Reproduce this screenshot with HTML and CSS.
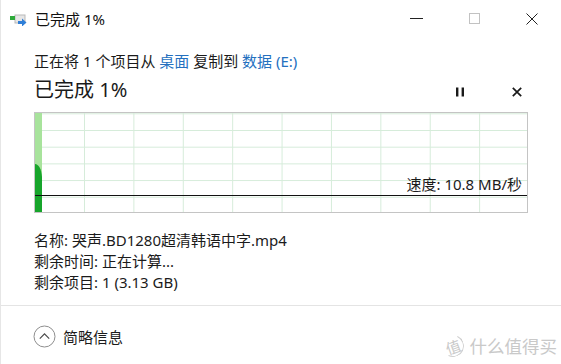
FILE: index.html
```html
<!DOCTYPE html>
<html lang="zh-CN">

<head>
    <meta charset="UTF-8">
    <meta name="viewport" content="width=device-width, initial-scale=1.0">
    <title>已完成 1%</title>
    <link rel="stylesheet" href="styles.css">
</head>

<body>

    <div class="window">
        <!-- barra del titolo -->
        <header class="titlebar">
            <svg class="app-icon" width="18" height="12" viewBox="0 0 18 12">
                <rect x="5" y="1" width="10" height="8" fill="#e6e6e6" stroke="#b9b9b9" stroke-width="1" />
                <rect x="0" y="2" width="5" height="4" fill="#2eaa3a" />
                <path d="M8 7 h4 v-2.5 l4.5 4 l-4.5 4 v-2.5 h-4 z" fill="#2f7fd8" />
            </svg>
            <span class="title">已完成 1%</span>
            <div class="controls">
                <span class="ctl"><span class="ctl-min"></span></span>
                <span class="ctl"><span class="ctl-max"></span></span>
                <span class="ctl">
                    <svg width="12" height="12" viewBox="0 0 12 12">
                        <path d="M0.5 0.5 L11.5 11.5 M11.5 0.5 L0.5 11.5" stroke="#222" stroke-width="1" />
                    </svg>
                </span>
            </div>
        </header>

        <main class="content">
            <p class="copy-line">正在将 1 个项目从 <a href="#">桌面</a> 复制到 <a href="#">数据 (E:)</a></p>

            <div class="progress-head">
                <h1>已完成 1%</h1>
                <div class="actions">
                    <button class="icon-btn" aria-label="暂停">
                        <svg width="10" height="10" viewBox="0 0 10 10">
                            <rect x="1" y="0.5" width="2.4" height="9" fill="#1a1a1a" />
                            <rect x="6.6" y="0.5" width="2.4" height="9" fill="#1a1a1a" />
                        </svg>
                    </button>
                    <button class="icon-btn" aria-label="取消">
                        <svg width="10" height="10" viewBox="0 0 10 10">
                            <path d="M0.8 0.8 L9.2 9.2 M9.2 0.8 L0.8 9.2" stroke="#1a1a1a" stroke-width="1.7" />
                        </svg>
                    </button>
                </div>
            </div>

            <!-- grafico della velocita -->
            <div class="chart">
                <svg class="chart-fill" width="8" height="99" viewBox="0 0 8 99">
                    <rect x="0" y="0" width="7" height="99" fill="#a8e39c" />
                    <path d="M0 51 C3.5 51 6.5 56 7 64 L7 99 L0 99 Z" fill="#17a52b" />
                </svg>
                <div class="speed">速度: 10.8 MB/秒</div>
                <div class="baseline"></div>
            </div>

            <ul class="details">
                <li>名称: 哭声.BD1280超清韩语中字.mp4</li>
                <li>剩余时间: 正在计算...</li>
                <li>剩余项目: 1 (3.13 GB)</li>
            </ul>
        </main>

        <footer class="footer">
            <svg class="chevron" width="23" height="23" viewBox="0 0 23 23">
                <circle cx="11.5" cy="11.5" r="10.5" fill="none" stroke="#8e8e8e" stroke-width="1" />
                <polyline points="6.8,13.6 11.5,8.9 16.2,13.6" fill="none" stroke="#4a4a4a" stroke-width="1.2" />
            </svg>
            <span class="toggle-label">简略信息</span>

            <div class="watermark">
                <span class="wm-badge">值</span>
                <span>什么值得买</span>
            </div>
        </footer>
    </div>

</body>

</html>
```

FILE: styles.css
```css
* {
    box-sizing: border-box;
}

body {
    margin: 0;
    background-color: #ffffff;
    font-family: 'Noto Sans', 'Noto Sans CJK SC', sans-serif;
    color: #1b1b1b;
}

p,
h1,
ul {
    margin: 0;
}

.window {
    width: 561px;
    height: 364px;
    display: flex;
    flex-direction: column;
    background-color: #ffffff;
    border-left: 1px solid #e6e6e6;
}

/* barra del titolo */
.titlebar {
    height: 37px;
    display: flex;
    align-items: center;
}

.app-icon {
    margin-left: 9px;
    margin-top: 2px;
}

.title {
    margin-left: 7px;
    font-size: 15px;
    color: #111;
}

.controls {
    margin-left: auto;
    display: flex;
    height: 100%;
}

.ctl {
    width: 58px;
    height: 100%;
    display: flex;
    align-items: center;
    justify-content: center;
}

.ctl-min {
    width: 13px;
    height: 1px;
    background-color: #222;
}

.ctl-max {
    width: 11px;
    height: 11px;
    border: 1px solid #c2c2c2;
}

/* contenuto */
.content {
    padding: 0 33px;
}

.copy-line {
    margin-top: 13px;
    font-size: 15px;
    line-height: 22px;
}

.copy-line a {
    color: #2470bf;
    text-decoration: none;
}

.progress-head {
    height: 36px;
    display: flex;
    align-items: center;
}

.progress-head h1 {
    font-size: 20px;
    font-weight: 400;
    line-height: 28px;
    color: #1a1a1a;
}

.actions {
    margin-left: auto;
    display: flex;
    gap: 34px;
    margin-top: 4px;
}

.icon-btn {
    width: 23px;
    height: 14px;
    padding: 0;
    border: none;
    background: none;
    display: flex;
    align-items: center;
    justify-content: center;
}

.chart {
    position: relative;
    margin-top: 4px;
    height: 101px;
    border: 1px solid #c4c4c4;
    display: flex;
    flex-direction: column;
    justify-content: flex-end;
    padding-bottom: 16px;
    background-image:
        linear-gradient(to right, #d6ecda 1px, transparent 1px),
        linear-gradient(to bottom, #d6ecda 1px, transparent 1px);
    background-size: 49.4px 100%, 100% 16.7px;
    background-position: 49px 0, 0 17px;
}

.chart-fill {
    position: absolute;
    left: 0;
    top: 0;
}

.speed {
    position: relative;
    font-size: 15px;
    line-height: 20px;
    text-align: right;
    padding-right: 5px;
    margin-bottom: 1px;
}

.baseline {
    position: relative;
    height: 1px;
    background-color: #111;
}

.details {
    margin-top: 17px;
    padding: 0;
    list-style: none;
    font-size: 15px;
    line-height: 21px;
}

/* piede */
.footer {
    margin-top: auto;
    height: 59px;
    border-top: 1px solid #e4e4e4;
    display: flex;
    align-items: center;
    padding-left: 32px;
    padding-top: 2px;
}

.toggle-label {
    margin-left: 7px;
    font-size: 15px;
}

.watermark {
    margin-left: auto;
    margin-right: 4px;
    align-self: flex-end;
    margin-bottom: 6px;
    display: flex;
    align-items: center;
    gap: 6px;
    color: #c9c9c9;
    font-size: 17.5px;
}

.wm-badge {
    width: 22px;
    height: 22px;
    border: 1.5px solid #cfcfcf;
    border-left-color: transparent;
    border-top-color: transparent;
    border-radius: 50%;
    transform: rotate(-20deg);
    display: flex;
    align-items: center;
    justify-content: center;
    font-size: 15px;
}

.wm-badge::first-line {
    color: #c9c9c9;
}
```
